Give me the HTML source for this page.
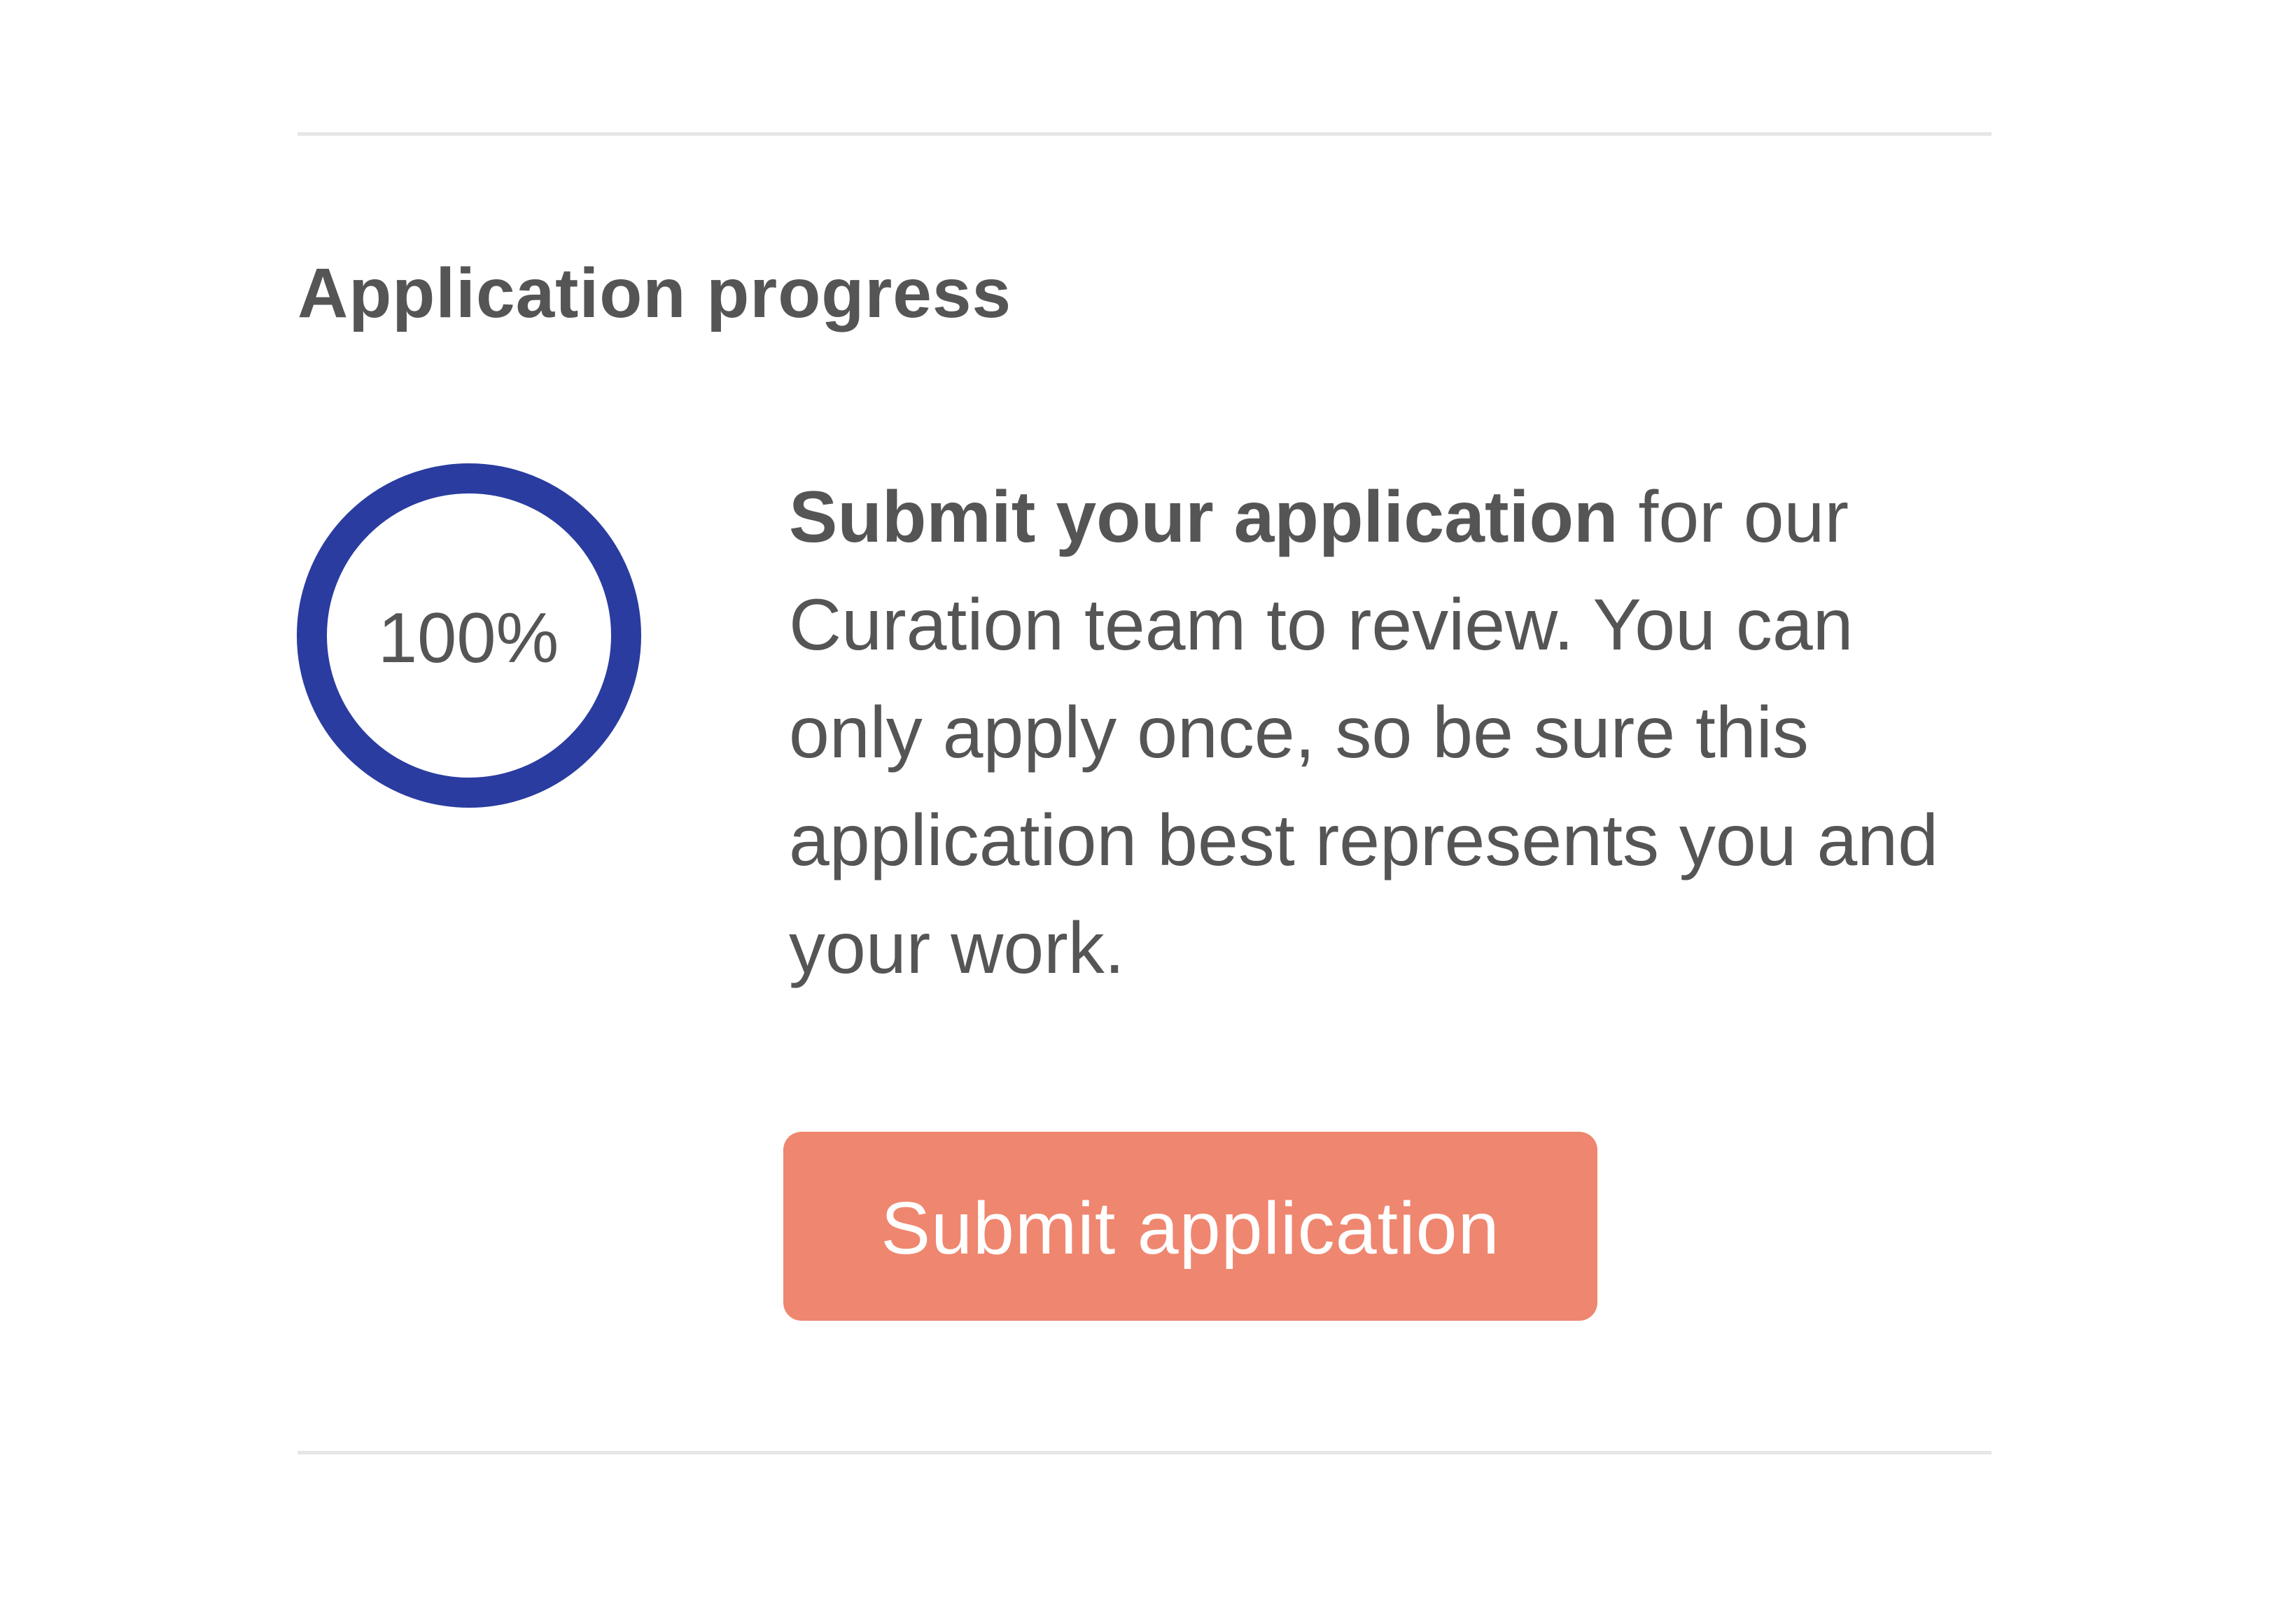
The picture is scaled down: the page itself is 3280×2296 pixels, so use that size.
<!DOCTYPE html>
<html><head><style>
html,body{margin:0;padding:0;background:#fff;width:3280px;height:2296px;overflow:hidden;position:relative}
.t{position:absolute;white-space:nowrap;line-height:1;font-family:"Liberation Sans",sans-serif;color:#555}
.hr{position:absolute;left:425px;width:2420px;height:5px;background:#e6e6e6}
</style></head><body>
<div class="hr" style="top:189px"></div>
<div class="hr" style="top:2073px"></div>
<div class="t" style="left:425px;top:369px;font-size:100px;font-weight:bold;letter-spacing:1px">Application progress</div>
<svg style="position:absolute;left:424px;top:662px" width="492" height="492"><circle cx="246" cy="246" r="224.5" fill="none" stroke="#2a3c9f" stroke-width="43"/></svg>
<div class="t" style="left:540px;width:256px;text-align:center;top:862px;font-size:101px">100%</div>
<div class="t" style="left:1127px;top:687px;font-size:104px"><b>Submit your application</b> for our</div>
<div class="t" style="left:1127px;top:841px;font-size:104px">Curation team to review. You can</div>
<div class="t" style="left:1127px;top:995px;font-size:104px">only apply once, so be sure this</div>
<div class="t" style="left:1127px;top:1149px;font-size:104px">application best represents you and</div>
<div class="t" style="left:1127px;top:1303px;font-size:104px">your work.</div>
<div style="position:absolute;left:1119px;top:1617px;width:1163px;height:270px;background:#ef866f;border-radius:26px"></div>
<div class="t" style="left:1119px;width:1163px;text-align:center;top:1702px;font-size:106px;color:#fff;letter-spacing:1px">Submit application</div>
</body></html>
